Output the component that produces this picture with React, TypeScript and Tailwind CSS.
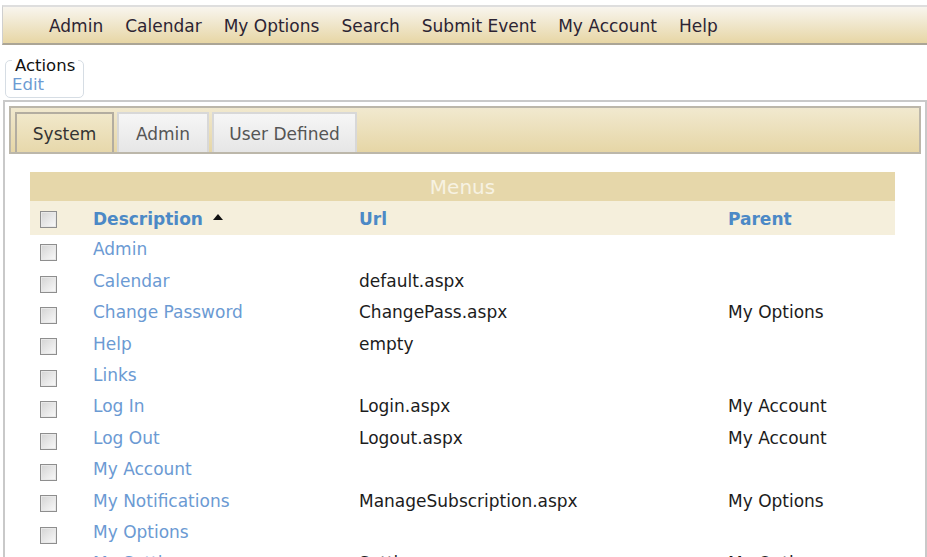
import React from "react";

const topMenu = ["Admin", "Calendar", "My Options", "Search", "Submit Event", "My Account", "Help"];

const rows: [string, string, string][] = [
  ["Admin", "", ""],
  ["Calendar", "default.aspx", ""],
  ["Change Password", "ChangePass.aspx", "My Options"],
  ["Help", "empty", ""],
  ["Links", "", ""],
  ["Log In", "Login.aspx", "My Account"],
  ["Log Out", "Logout.aspx", "My Account"],
  ["My Account", "", ""],
  ["My Notifications", "ManageSubscription.aspx", "My Options"],
  ["My Options", "", ""],
  ["My Settings", "Settings.aspx", "My Options"],
];

const Check = () => (
  <span className="block h-[17px] w-[17px] border border-[#8e8e8e] bg-gradient-to-br from-[#d4d4d4] to-[#fafafa] shadow-[inset_0_0_0_1px_#e8e8e8]" />
);

const cols = "grid grid-cols-[63px_266px_369px_1fr] items-center";

export default function App() {
  return (
    <div className="h-[557px] w-[927px] overflow-hidden bg-white pt-[5px] text-[17px] text-[#222] [font-family:'DejaVu_Sans',Verdana,sans-serif]">
      {/* top menu */}
      <div className="ml-[2px] border-t-2 border-b-2 border-l border-t-[#dedede] border-b-[#aba596] border-l-[#cfcfcf] bg-gradient-to-b from-[#f8f5ee] to-[#e7d6a5]">
        <div className="flex h-[36px] items-center gap-[22px] pl-[46px] pt-[4px] text-[#2c2433]">
          {topMenu.map((m) => (
            <span key={m}>{m}</span>
          ))}
        </div>
      </div>

      {/* actions box */}
      <div className="ml-[5px] mt-[15px] h-[38px] w-[79px] rounded-[5px] border border-[#d6dde4] px-[6px] text-[16.5px] leading-[19px]">
        <div className="-mt-[5px] w-fit bg-white px-[3px] text-[#111]">Actions</div>
        <div className="text-[#6d9bd2]">Edit</div>
      </div>

      {/* panel */}
      <div className="ml-[3px] mt-[2px] h-[500px] border-2 border-[#c9c9c9] p-[4px]">
        <div className="flex h-[48px] items-end gap-[3px] border-2 border-[#bcb7aa] bg-gradient-to-b from-[#f1e9cf] to-[#e6d6a6] pl-[4px]">
          <div className="flex h-[40px] w-[99px] items-center justify-center border-2 border-b-0 border-[#b3ada0] bg-gradient-to-b from-[#f1e8ca] to-[#e7d8ab] pt-[3px] text-[#333]">
            System
          </div>
          <div className="flex h-[40px] w-[92px] items-center justify-center border-2 border-b-0 border-[#d8d8d8] bg-gradient-to-b from-[#f6f6f6] to-[#e6e6e6] pt-[3px] text-[#555]">
            Admin
          </div>
          <div className="flex h-[40px] w-[145px] items-center justify-center border-2 border-b-0 border-[#d8d8d8] bg-gradient-to-b from-[#f6f6f6] to-[#e6e6e6] pt-[3px] text-[#555]">
            User Defined
          </div>
        </div>

        <div className="ml-[21px] mt-[18px] w-[865px]">
          <div className="flex h-[29px] items-center justify-center bg-[#e6d7aa] text-[20px] text-[#f7f2e2]">
            Menus
          </div>
          <div className={`${cols} h-[34px] bg-[#f5efdc] pt-[3px] font-bold text-[#4c89c6]`}>
            <div className="pl-[10px]">
              <Check />
            </div>
            <div className="flex items-center">
              Description
              <svg width="10" height="6" viewBox="0 0 10 6" className="mb-[6px] ml-[10px]">
                <path d="M0 6 L5 0 L10 6 Z" fill="#111" />
              </svg>
            </div>
            <div>Url</div>
            <div>Parent</div>
          </div>
          {rows.map(([d, u, p]) => (
            <div key={d} className={`${cols} h-[31.4px]`}>
              <div className="pl-[10px] pt-[4px]">
                <Check />
              </div>
              <div className="-mt-[1px] text-[#6b9ad3]">{d}</div>
              <div className="-mt-[1px] text-[#1c1c1c]">{u}</div>
              <div className="-mt-[1px] text-[#1c1c1c]">{p}</div>
            </div>
          ))}
        </div>
      </div>
    </div>
  );
}
